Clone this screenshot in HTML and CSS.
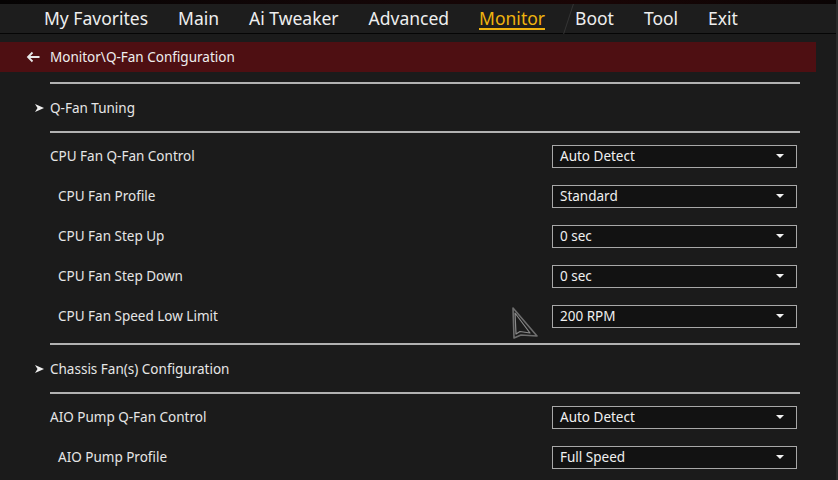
FILE: index.html
```html
<!DOCTYPE html>
<html>
<head>
<meta charset="utf-8">
<link rel="stylesheet" href="styles.css">
</head>
<body>
<div class="page">
  <div class="topstrip"></div>
  <nav class="tabs">
    <span class="tab">My Favorites</span>
    <span class="tab">Main</span>
    <span class="tab">Ai Tweaker</span>
    <span class="tab">Advanced</span>
    <span class="tab active">Monitor</span>
    <span class="tab">Boot</span>
    <span class="tab">Tool</span>
    <span class="tab">Exit</span>
    <span class="deco"></span>
  </nav>
  <div class="crumb">
    <svg class="back" width="14" height="12" viewBox="0 0 14 12"><path d="M13.5 6H2M6.5 1.5L2 6l4.5 4.5" fill="none" stroke="#e8e8e8" stroke-width="1.8"/></svg>
    <span>Monitor\Q-Fan Configuration</span>
  </div>
  <div class="content">
    <div class="sep first"></div>
    <div class="section"><svg class="chev" width="9" height="8" viewBox="0 0 9 8"><path d="M0 0L9 4L0 8L2.5 4Z" fill="#f0f0f0"/></svg>Q-Fan Tuning</div>
    <div class="sep"></div>
    <div class="group">
      <div class="item"><span class="label">CPU Fan Q-Fan Control</span><div class="select"><span>Auto Detect</span><i class="arrow"></i></div></div>
      <div class="item sub"><span class="label">CPU Fan Profile</span><div class="select"><span>Standard</span><i class="arrow"></i></div></div>
      <div class="item sub"><span class="label">CPU Fan Step Up</span><div class="select"><span>0 sec</span><i class="arrow"></i></div></div>
      <div class="item sub"><span class="label">CPU Fan Step Down</span><div class="select"><span>0 sec</span><i class="arrow"></i></div></div>
      <div class="item sub"><span class="label">CPU Fan Speed Low Limit</span>
        <svg class="cursor" width="28" height="32" viewBox="0 0 28 32"><path d="M2 1L26 29L10 28L3 31Z" fill="none" stroke="#6e6e6e" stroke-width="1.6" stroke-linejoin="round"/><path d="M4 6L19 26L9 24.5L5 27Z" fill="none" stroke="#8a8a8a" stroke-width="1.2" stroke-linejoin="round"/></svg>
        <div class="select"><span>200 RPM</span><i class="arrow"></i></div></div>
    </div>
    <div class="sep mid"></div>
    <div class="section"><svg class="chev" width="9" height="8" viewBox="0 0 9 8"><path d="M0 0L9 4L0 8L2.5 4Z" fill="#f0f0f0"/></svg>Chassis Fan(s) Configuration</div>
    <div class="sep"></div>
    <div class="group">
      <div class="item"><span class="label">AIO Pump Q-Fan Control</span><div class="select"><span>Auto Detect</span><i class="arrow"></i></div></div>
      <div class="item sub"><span class="label">AIO Pump Profile</span><div class="select"><span>Full Speed</span><i class="arrow"></i></div></div>
    </div>
  </div>
</div>
</body>
</html>
```
FILE: styles.css
```css
html, body {
  margin: 0;
  padding: 0;
  background: #1b1b1b;
  overflow: hidden;
}
body {
  font-family: "Noto Sans", "Open Sans", sans-serif;
  color: #e6e6e6;
  width: 838px;
  height: 480px;
}
.page {
  width: 838px;
  height: 480px;
  border-right: 2px solid #2a2a2a;
  box-sizing: border-box;
  position: relative;
  overflow: hidden;
}
.topstrip {
  height: 4px;
  background: linear-gradient(90deg, #050303 0%, #120607 40%, #1a0505 70%, #0a0404 100%);
}
.tabs {
  height: 29px;
  background: #1d1d1d;
  border-bottom: 1px solid #050505;
  display: flex;
  align-items: flex-start;
  padding-left: 44px;
  gap: 30px;
  position: relative;
}
.tab {
  font-size: 17.5px;
  line-height: 22px;
  padding-top: 3px;
  color: #eeeeee;
  height: 22px;
}
.tab.active {
  color: #efb30e;
  border-bottom: 2px solid #efb30e;
  height: 21px;
}
.deco {
  position: absolute;
  left: 568px;
  top: 0;
  width: 1px;
  height: 30px;
  background: #353535;
  transform: skewX(-18deg);
}
.crumb {
  margin-top: 8px;
  width: 816px;
  height: 30px;
  background: #4e0f12;
  display: flex;
  align-items: center;
  font-size: 13.5px;
  color: #eeeeee;
}
.back {
  margin-left: 26px;
  margin-right: 10px;
}
.content {
  margin-left: 50px;
  width: 750px;
}
.sep {
  height: 2px;
  background: #b2b2b2;
}
.sep.first {
  margin-top: 10px;
}
.sep.mid {
  margin-top: 7px;
}
.section {
  height: 47px;
  display: flex;
  align-items: center;
  font-size: 13.5px;
  position: relative;
}
.chev {
  position: absolute;
  left: -15px;
  top: 20px;
}
.group {
  padding-top: 3px;
}
.item {
  height: 40px;
  display: flex;
  align-items: center;
  font-size: 13.5px;
  position: relative;
}
.item.sub .label {
  padding-left: 8px;
}
.label {
  flex: 1;
}
.select {
  width: 245px;
  height: 23px;
  box-sizing: border-box;
  border: 1px solid #a8a8a8;
  background: #121212;
  margin-right: 3px;
  display: flex;
  align-items: center;
  padding-left: 7px;
  padding-right: 12px;
  font-size: 13.5px;
  color: #f0f0f0;
}
.select span {
  flex: 1;
}
.arrow {
  width: 0;
  height: 0;
  border-left: 4px solid transparent;
  border-right: 4px solid transparent;
  border-top: 4px solid #f2f2f2;
}
.cursor {
  position: absolute;
  left: 461px;
  top: 11px;
}
```
